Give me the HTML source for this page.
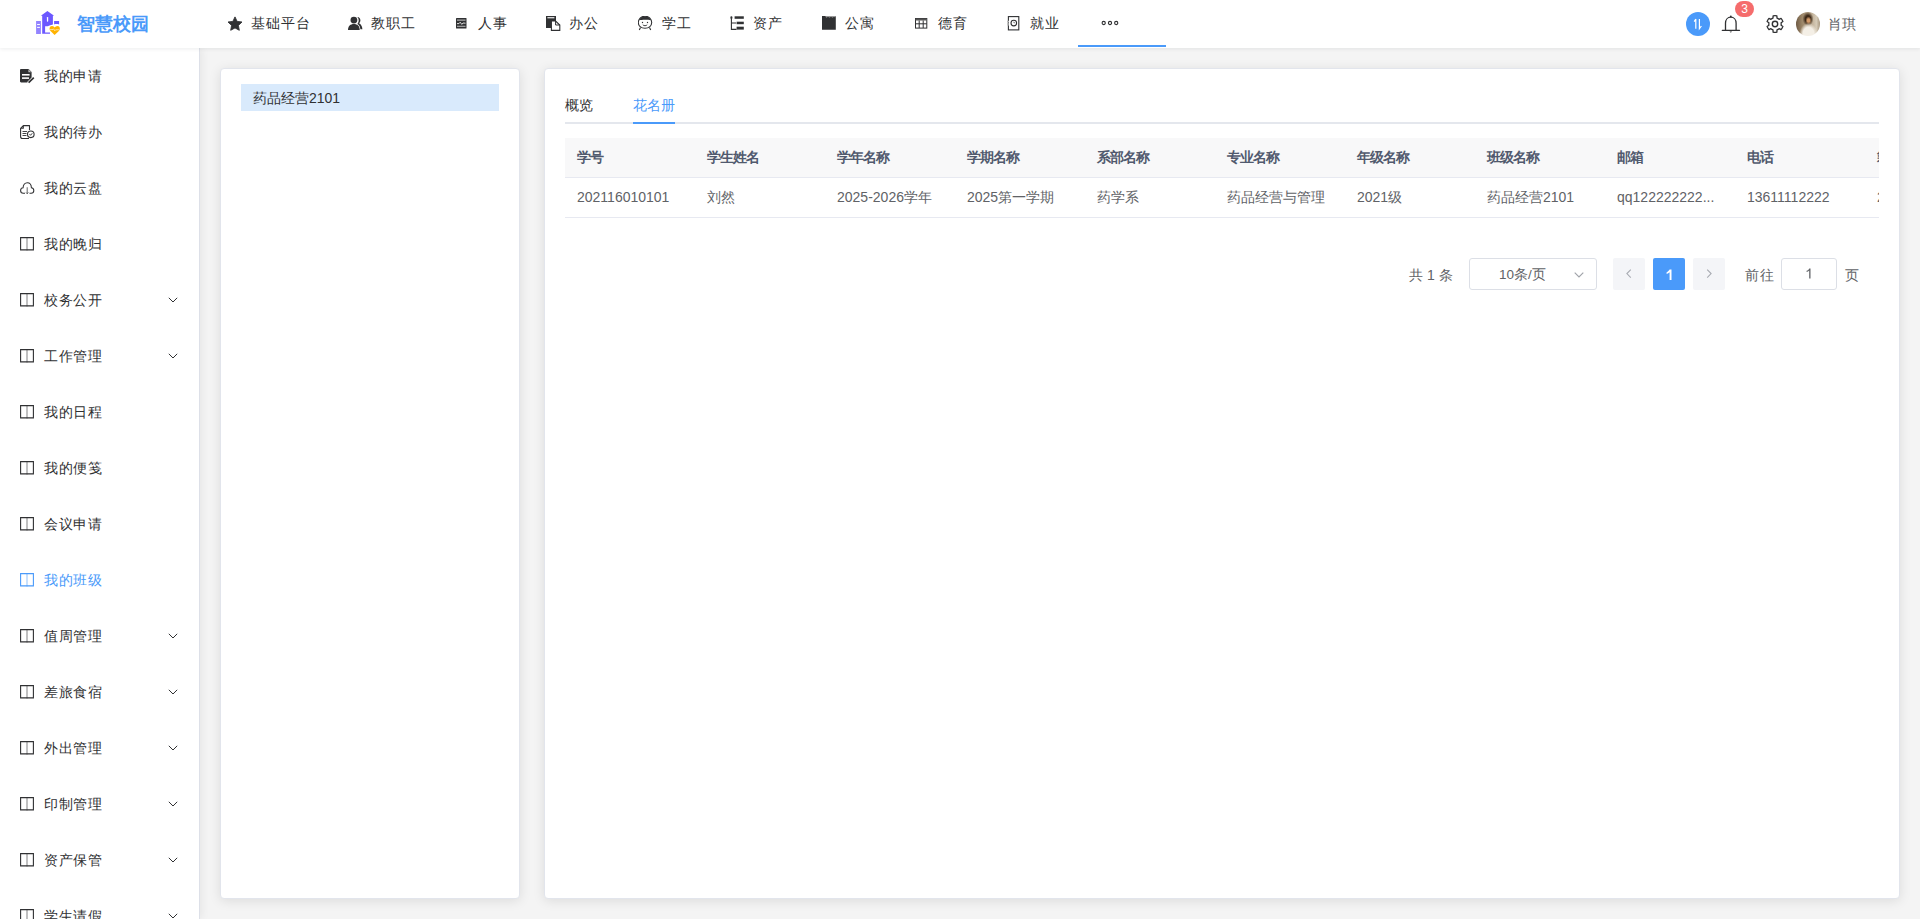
<!DOCTYPE html>
<html><head><meta charset="utf-8">
<style>
*{margin:0;padding:0;box-sizing:border-box}
html,body{width:1920px;height:919px;overflow:hidden;background:#f4f4f4;font-family:"Liberation Sans",sans-serif;font-size:14px;color:#303133}
.hdr{position:absolute;left:0;top:0;width:1920px;height:48px;background:#fff;box-shadow:0 1px 4px rgba(0,21,41,.08);z-index:5}
.logo{position:absolute}
.title{position:absolute;left:77px;top:12px;font-size:18px;font-weight:bold;color:#4a9afa;line-height:24px;letter-spacing:0}
.nav{position:absolute;top:0;height:48px}
.ni{position:absolute;top:0;height:48px;line-height:46px;color:#303133;white-space:nowrap}
.ni svg{position:absolute;top:16px;left:0}
.ni span{position:absolute;top:0;letter-spacing:1px}
.more-ul{position:absolute;left:1078px;top:45px;width:88px;height:2px;background:#4a9afa}
.side{position:absolute;left:0;top:48px;width:200px;height:871px;background:#fff;border-right:1px solid #dde0e8;box-shadow:2px 0 8px rgba(0,0,0,.06);z-index:4;overflow:hidden}
.si{position:absolute;left:0;width:199px;height:56px;line-height:56px}
.si svg.ic{position:absolute;left:20px;top:21px}
.si span{position:absolute;left:44px;top:0;color:#303133;letter-spacing:.5px}
.si.act span{color:#4a9afa}
.si svg.ch{position:absolute;left:168px;top:25px}
.card{position:absolute;background:#fff;border:1px solid #e2e5ec;border-radius:4px;box-shadow:0 2px 12px 0 rgba(0,0,0,.1)}
.tbl{position:absolute;left:20px;top:69px;width:1314px;height:80px;overflow:hidden}
.thead{position:absolute;left:0;top:0;width:1314px;height:40px;background:#f8f8f9;border-bottom:1px solid #e7e9f1}
.tbody{position:absolute;left:0;top:40px;width:1314px;height:40px;border-bottom:1px solid #e7e9f1}
.th{position:absolute;top:0;line-height:39px;font-weight:bold;color:#515a6e;white-space:nowrap;letter-spacing:-1px}
.td{position:absolute;top:0;line-height:39px;color:#606266;white-space:nowrap}
.pg{position:absolute;left:0;top:189px;width:1354px;height:32px}
.sel{position:absolute;left:924px;top:0;width:128px;height:32px;border:1px solid #dcdfe6;border-radius:3px;color:#606266;font-size:13.5px}
.sel span{position:absolute;left:29px;top:1px;line-height:30px}
.pbtn{position:absolute;top:0;width:32px;height:32px;background:#f4f5f8;border-radius:2px;text-align:center;line-height:32px;color:#606266;font-weight:bold;font-size:13px}
.pbtn svg{position:absolute;left:13px;top:11px}
.pbtn.act{background:#4a9afa;color:#fff}
.jump{position:absolute;left:1236px;top:0;width:56px;height:32px;border:1px solid #dcdfe6;border-radius:3px;text-align:center;line-height:30px;color:#606266;font-size:13px}
</style></head><body>
<div class="hdr">
  <svg class="logo" style="position:absolute;left:34px;top:8px" width="28" height="30" viewBox="0 0 28 30">
    <rect x="2.1" y="13" width="4.8" height="13" fill="#9384ff"/>
    <rect x="3.1" y="16" width="2.8" height="1" fill="#fff"/>
    <rect x="3.1" y="18.9" width="2.8" height="1" fill="#fff"/>
    <path d="M6.85 7.7 L13.4 2.9 L20.1 7.7 L18.9 7.7 L18.9 16.5 Q17 17 15.5 17.5 Q14 18.3 13.6 18.3 L11.1 18.3 L11.1 24.5 L16 24.5 L16 25.8 L8.2 25.8 L8.2 7.7 Z" fill="#6c58ff"/>
    <rect x="12.9" y="9" width="1.3" height="4.7" rx=".6" fill="#fff"/>
    <path d="M20.1 13 L25.1 13 L25.1 16.6 L24 16 L21 16 L20.1 16.6Z" fill="#6c58ff"/>
    <path d="M20.6 27.1 L16.5 23 C15 21.5 15.2 18 18 18 C19.3 18 20.1 18.8 20.7 19.6 C21.3 18.8 22.1 18 23.5 18 C26.3 18 26.4 21.5 24.9 23 Z" fill="#ffb300"/>
    <path d="M16 21.6 L19 21.6 L19.6 20.8 L20.8 22.8 L21.6 21.8 L25 21.8" stroke="#fff" stroke-width=".7" fill="none" opacity=".85"/>
  </svg>
  <div class="title">智慧校园</div>
  <!-- nav -->
  <div class="ni" style="left:227px"><svg width="16" height="16" viewBox="0 0 16 16" style="top:15.5px;left:0"><path d="M8 .9 L10.1 5.4 L15 6 L11.4 9.4 L12.3 14.3 L8 11.9 L3.7 14.3 L4.6 9.4 L1 6 L5.9 5.4 Z" fill="#303133" stroke="#303133" stroke-width=".9" stroke-linejoin="round"/></svg><span style="left:24px">基础平台</span></div>
  <div class="ni" style="left:348px"><svg width="15" height="15" viewBox="0 0 15 15" style="top:16px"><path d="M9.3 .9 C11.2 .9 12.4 2.4 12.4 4.3 C12.4 5.6 11.8 6.7 11 7.3 C12.9 8.1 14.2 10.2 14.4 13.3 L12.4 13.3 C12.2 10.6 11.2 8.8 9.3 8 C10.2 7 10.7 5.7 10.7 4.3 C10.7 3 10.2 1.8 9.3 .9 Z" fill="#303133"/><circle cx="5.9" cy="4.1" r="3.4" fill="#303133"/><path d="M0 14 C0 10 2.4 8 5.9 8 C9.4 8 11.7 10 11.7 14 Z" fill="#303133"/></svg><span style="left:23px">教职工</span></div>
  <div class="ni" style="left:456px"><svg width="11" height="11" viewBox="0 0 11 11" style="top:18px"><rect x="0" y="0" width="10.5" height="10.5" rx=".6" fill="#303133"/><rect x="1" y="1.6" width="8.5" height="1" fill="#ccc"/><rect x="1" y="7.8" width="8.5" height=".9" fill="#ccc"/><path d="M1 5.6 L3 5.6 L4.2 4.2 L5.8 6.4 L7 5 L9.5 5.2" stroke="#eee" stroke-width=".9" fill="none"/></svg><span style="left:22px">人事</span></div>
  <div class="ni" style="left:546px"><svg width="15" height="15" viewBox="0 0 15 15" style="top:16px"><rect x="0" y="0" width="10" height="12" fill="#303133"/><rect x="1.4" y="1.2" width="7" height="1.1" fill="#fff"/><path d="M5.4 5 L9.6 5 L13.8 9 L13.8 14.4 L5.4 14.4 Z" fill="#fff" stroke="#303133" stroke-width="1.1"/><path d="M9.6 5 L9.6 9 L13.8 9" fill="none" stroke="#303133" stroke-width="1"/></svg><span style="left:23px">办公</span></div>
  <div class="ni" style="left:638px"><svg width="15" height="15" viewBox="0 0 15 15" style="top:16px"><path d="M7 .2 C3 .2 .3 3 .3 6.6 C.3 9.8 3 12.3 7 12.3 C11 12.3 13.7 9.8 13.7 6.6 C13.7 3 11 .2 7 .2Z" fill="none" stroke="#303133" stroke-width="1.1"/><path d="M.9 4.3 C1.8 1.6 4.2 .4 7 .4 C9.8 .4 12.2 1.6 13.1 4.3 C10 3.6 4 3.6 .9 4.3Z" fill="#303133"/><circle cx="4.5" cy="6.5" r=".7" fill="#303133"/><circle cx="9.5" cy="6.5" r=".7" fill="#303133"/><path d="M4.8 8.8 C5.8 10 8.2 10 9.2 8.8" stroke="#303133" stroke-width=".9" fill="none"/><path d="M2.5 11.4 L1.3 14 M11.5 11.4 L12.7 14" stroke="#303133" stroke-width="1.1"/></svg><span style="left:24px">学工</span></div>
  <div class="ni" style="left:730px"><svg width="15" height="15" viewBox="0 0 15 15" style="top:16px"><rect x=".4" y=".2" width="2" height="2.8" rx=".9" fill="#303133"/><path d="M1.4 2.6 V13.4 H6.5 M1.4 7 H6" stroke="#303133" stroke-width="1.1" fill="none"/><rect x="4.6" y=".3" width="9.2" height="2.5" fill="#303133"/><rect x="6.6" y="5.7" width="7.2" height="2.5" fill="#303133"/><rect x="6.6" y="10.7" width="7.2" height="2.9" fill="#303133"/></svg><span style="left:23px">资产</span></div>
  <div class="ni" style="left:822px"><svg width="15" height="15" viewBox="0 0 15 15" style="top:16px"><path d="M0 0 L4 0 L4 1.2 L5 1.2 L5 0 L7 0 L7 1.2 L8 1.2 L8 0 L10 0 L10 1.2 L11 1.2 L11 0 L13.8 0 L13.8 13.8 L0 13.8Z" fill="#303133"/><rect x="3.5" y="0" width="10.3" height="1.1" fill="#999"/></svg><span style="left:23px">公寓</span></div>
  <div class="ni" style="left:915px"><svg width="13" height="11" viewBox="0 0 13 11" style="top:18px"><rect x=".5" y=".5" width="11.3" height="9.6" fill="none" stroke="#303133" stroke-width="1"/><rect x=".5" y=".5" width="11.3" height="2" fill="#555"/><path d="M4.2 2.5 V10 M8.2 2.5 V10 M.5 5.8 H11.8" stroke="#303133" stroke-width="1"/></svg><span style="left:23px">德育</span></div>
  <div class="ni" style="left:1006px"><svg width="14" height="15" viewBox="0 0 14 15" style="top:16px"><rect x="2.4" y=".6" width="10.4" height="13.3" fill="none" stroke="#303133" stroke-width="1.1"/><circle cx="7.8" cy="7.1" r="2.8" fill="none" stroke="#303133" stroke-width="1.1"/><path d="M7.8 5.8 L8.4 7.2" stroke="#303133" stroke-width=".8"/><path d="M1 5.3 H3.6 M1 7.1 H3.6 M1 8.9 H3.6" stroke="#fff" stroke-width=".8"/><path d="M1 5.3 H2 M1 7.1 H2 M1 8.9 H2" stroke="#888" stroke-width=".7"/></svg><span style="left:24px">就业</span></div>
  <div class="ni" style="left:1101px"><svg width="18" height="6" viewBox="0 0 18 6" style="top:20px"><circle cx="2.7" cy="3" r="1.6" fill="none" stroke="#303133" stroke-width="1.1"/><circle cx="9" cy="3" r="1.6" fill="none" stroke="#303133" stroke-width="1.1"/><circle cx="15.2" cy="3" r="1.6" fill="none" stroke="#303133" stroke-width="1.1"/></svg></div>
  <div class="more-ul"></div>
  <!-- right -->
  <div style="position:absolute;left:1686px;top:12px;width:24px;height:24px;border-radius:50%;background:#4a9afa"><svg width="24" height="24" viewBox="0 0 24 24"><path d="M9.8 7 L9.8 16.7 M9.8 7 L8.2 9.6" stroke="#fff" stroke-width="1.2" fill="none"/><path d="M13.4 7 L13.4 16.7 L15.4 14" stroke="#fff" stroke-width="1.2" fill="none"/></svg></div>
  <svg style="position:absolute;left:1721px;top:15px" width="20" height="20" viewBox="0 0 20 20"><path d="M4.5 15 L4.5 8.2 C4.5 4.6 6.8 2.2 9.8 2.2 C12.8 2.2 15.1 4.6 15.1 8.2 L15.1 15" fill="none" stroke="#303133" stroke-width="1.3"/><path d="M1.3 15.3 H18.5" stroke="#303133" stroke-width="1.3" stroke-linecap="round"/><circle cx="9.8" cy="1.5" r=".9" fill="#303133"/><path d="M8.5 16.2 H11.1 L9.8 18.1Z" fill="#777"/></svg>
  <div style="position:absolute;left:1735px;top:1px;width:19px;height:16px;border-radius:8px;background:#f56c6c;color:#fff;font-size:12px;line-height:16px;text-align:center">3</div>
  <svg style="position:absolute;left:1766px;top:15px" width="18" height="18" viewBox="0 0 18 18"><path d="M6.98 3.14 L7.13 0.91 A8.30 8.30 0 0 1 10.87 0.91 L11.02 3.14 A6.20 6.20 0 0 1 13.07 4.32 L15.07 3.34 A8.30 8.30 0 0 1 16.94 6.57 L15.09 7.82 A6.20 6.20 0 0 1 15.09 10.18 L16.94 11.43 A8.30 8.30 0 0 1 15.07 14.66 L13.07 13.68 A6.20 6.20 0 0 1 11.02 14.86 L10.87 17.09 A8.30 8.30 0 0 1 7.13 17.09 L6.98 14.86 A6.20 6.20 0 0 1 4.93 13.68 L2.93 14.66 A8.30 8.30 0 0 1 1.06 11.43 L2.91 10.18 A6.20 6.20 0 0 1 2.91 7.82 L1.06 6.57 A8.30 8.30 0 0 1 2.93 3.34 L4.93 4.32 A6.20 6.20 0 0 1 6.98 3.14 Z" fill="none" stroke="#303133" stroke-width="1.3" stroke-linejoin="round"/><circle cx="9" cy="9" r="2.7" fill="none" stroke="#303133" stroke-width="1.4"/></svg>
  <div style="position:absolute;left:1796px;top:12px;width:24px;height:24px;border-radius:50%;overflow:hidden;background:radial-gradient(ellipse 9px 11px at 12.5px 22px,#f4efe6 62%,rgba(244,239,230,0) 100%),radial-gradient(ellipse 3px 4px at 12.5px 8.5px,#d49a68 40%,rgba(212,154,104,0) 100%),radial-gradient(ellipse 5.5px 7px at 12px 7px,#3e2a18 50%,rgba(62,42,24,0) 100%),linear-gradient(90deg,#6e5a44 0,#9c8668 25%,#b8a68c 60%,#d6cbb8 85%,#a89880 100%)"></div>
  <div style="position:absolute;left:1828px;top:12px;line-height:24px;color:#606266">肖琪</div>
</div>
<div class="side">
<div class="si" style="top:0px"><svg class="ic" width="15" height="15" viewBox="0 0 15 15" style="top:21px"><path d="M1.2 0 H8.6 L11.6 3 V8.4 L7.6 12.4 L7.3 13.4 H1.2 C.5 13.4 0 12.9 0 12.2 V1.2 C0 .5 .5 0 1.2 0Z" fill="#303133"/><path d="M8.4 .3 L11.3 3.2 L8.4 3.2Z" fill="#bbb"/><rect x="2" y="5" width="7.6" height="1.6" fill="#fff"/><rect x="2" y="8.3" width="7" height="1.6" fill="#fff"/><path d="M8.6 13.6 L13.8 8.6" stroke="#303133" stroke-width="1.7"/></svg><span>我的申请</span></div>
<div class="si" style="top:56px"><svg class="ic" width="15" height="15" viewBox="0 0 15 15" style="top:21px"><path d="M3.3 .6 H9.5 V5 M9 13.5 H2.3 C1.3 13.5 .6 12.8 .6 11.8 V3.3 L3.3 .6 V3.3 H.6" fill="none" stroke="#303133" stroke-width="1.1" stroke-linejoin="round"/><path d="M2.5 6.5 H7 M2.5 8.5 H6.5 M2.5 10.5 H6.5" stroke="#303133" stroke-width=".9"/><circle cx="10.8" cy="9.3" r="3.3" fill="#fff" stroke="#303133" stroke-width="1.1"/><path d="M9.4 9 L10.6 10.3 L12.3 8.2" fill="none" stroke="#303133" stroke-width=".9"/></svg><span>我的待办</span></div>
<div class="si" style="top:112px"><svg class="ic" width="15" height="13" viewBox="0 0 15 13" style="top:22px"><path d="M5 11.2 H3.3 C1.8 11.2 .6 10 .6 8.5 C.6 7 1.7 5.9 3.1 5.8 C3.2 3 5 .7 7.3 .7 C9.6 .7 11.3 2.9 11.4 5.7 C12.8 5.8 13.8 7 13.8 8.5 C13.8 10 12.6 11.2 11.1 11.2 H9.5" fill="none" stroke="#303133" stroke-width="1.05"/><path d="M7.2 5.2 V11.4" stroke="#303133" stroke-width="1.05" opacity=".7"/><path d="M6.2 10.6 L7.2 11.6 L8.2 10.6" fill="none" stroke="#303133" stroke-width="1"/></svg><span>我的云盘</span></div>
<div class="si" style="top:168px"><svg class="ic" width="15" height="15" viewBox="0 0 15 15" style="top:21px"><path d="M.6 .6 H13.4 V12.9 H.6 Z" fill="none" stroke="#303133" stroke-width="1.1"/><path d="M7 .6 V13.6" stroke="#303133" stroke-width="1.1" opacity=".55"/></svg><span>我的晚归</span></div>
<div class="si" style="top:224px"><svg class="ic" width="15" height="15" viewBox="0 0 15 15" style="top:21px"><path d="M.6 .6 H13.4 V12.9 H.6 Z" fill="none" stroke="#303133" stroke-width="1.1"/><path d="M7 .6 V13.6" stroke="#303133" stroke-width="1.1" opacity=".55"/></svg><span>校务公开</span><svg class="ch" width="10" height="6" viewBox="0 0 10 6"><path d="M.8 .8 L5 5 L9.2 .8" fill="none" stroke="#303133" stroke-width="1"/></svg></div>
<div class="si" style="top:280px"><svg class="ic" width="15" height="15" viewBox="0 0 15 15" style="top:21px"><path d="M.6 .6 H13.4 V12.9 H.6 Z" fill="none" stroke="#303133" stroke-width="1.1"/><path d="M7 .6 V13.6" stroke="#303133" stroke-width="1.1" opacity=".55"/></svg><span>工作管理</span><svg class="ch" width="10" height="6" viewBox="0 0 10 6"><path d="M.8 .8 L5 5 L9.2 .8" fill="none" stroke="#303133" stroke-width="1"/></svg></div>
<div class="si" style="top:336px"><svg class="ic" width="15" height="15" viewBox="0 0 15 15" style="top:21px"><path d="M.6 .6 H13.4 V12.9 H.6 Z" fill="none" stroke="#303133" stroke-width="1.1"/><path d="M7 .6 V13.6" stroke="#303133" stroke-width="1.1" opacity=".55"/></svg><span>我的日程</span></div>
<div class="si" style="top:392px"><svg class="ic" width="15" height="15" viewBox="0 0 15 15" style="top:21px"><path d="M.6 .6 H13.4 V12.9 H.6 Z" fill="none" stroke="#303133" stroke-width="1.1"/><path d="M7 .6 V13.6" stroke="#303133" stroke-width="1.1" opacity=".55"/></svg><span>我的便笺</span></div>
<div class="si" style="top:448px"><svg class="ic" width="15" height="15" viewBox="0 0 15 15" style="top:21px"><path d="M.6 .6 H13.4 V12.9 H.6 Z" fill="none" stroke="#303133" stroke-width="1.1"/><path d="M7 .6 V13.6" stroke="#303133" stroke-width="1.1" opacity=".55"/></svg><span>会议申请</span></div>
<div class="si act" style="top:504px"><svg class="ic" width="15" height="15" viewBox="0 0 15 15" style="top:21px"><path d="M.6 .6 H13.4 V12.9 H.6 Z" fill="none" stroke="#4a9afa" stroke-width="1.1"/><path d="M7 .6 V13.6" stroke="#4a9afa" stroke-width="1.1" opacity=".55"/></svg><span>我的班级</span></div>
<div class="si" style="top:560px"><svg class="ic" width="15" height="15" viewBox="0 0 15 15" style="top:21px"><path d="M.6 .6 H13.4 V12.9 H.6 Z" fill="none" stroke="#303133" stroke-width="1.1"/><path d="M7 .6 V13.6" stroke="#303133" stroke-width="1.1" opacity=".55"/></svg><span>值周管理</span><svg class="ch" width="10" height="6" viewBox="0 0 10 6"><path d="M.8 .8 L5 5 L9.2 .8" fill="none" stroke="#303133" stroke-width="1"/></svg></div>
<div class="si" style="top:616px"><svg class="ic" width="15" height="15" viewBox="0 0 15 15" style="top:21px"><path d="M.6 .6 H13.4 V12.9 H.6 Z" fill="none" stroke="#303133" stroke-width="1.1"/><path d="M7 .6 V13.6" stroke="#303133" stroke-width="1.1" opacity=".55"/></svg><span>差旅食宿</span><svg class="ch" width="10" height="6" viewBox="0 0 10 6"><path d="M.8 .8 L5 5 L9.2 .8" fill="none" stroke="#303133" stroke-width="1"/></svg></div>
<div class="si" style="top:672px"><svg class="ic" width="15" height="15" viewBox="0 0 15 15" style="top:21px"><path d="M.6 .6 H13.4 V12.9 H.6 Z" fill="none" stroke="#303133" stroke-width="1.1"/><path d="M7 .6 V13.6" stroke="#303133" stroke-width="1.1" opacity=".55"/></svg><span>外出管理</span><svg class="ch" width="10" height="6" viewBox="0 0 10 6"><path d="M.8 .8 L5 5 L9.2 .8" fill="none" stroke="#303133" stroke-width="1"/></svg></div>
<div class="si" style="top:728px"><svg class="ic" width="15" height="15" viewBox="0 0 15 15" style="top:21px"><path d="M.6 .6 H13.4 V12.9 H.6 Z" fill="none" stroke="#303133" stroke-width="1.1"/><path d="M7 .6 V13.6" stroke="#303133" stroke-width="1.1" opacity=".55"/></svg><span>印制管理</span><svg class="ch" width="10" height="6" viewBox="0 0 10 6"><path d="M.8 .8 L5 5 L9.2 .8" fill="none" stroke="#303133" stroke-width="1"/></svg></div>
<div class="si" style="top:784px"><svg class="ic" width="15" height="15" viewBox="0 0 15 15" style="top:21px"><path d="M.6 .6 H13.4 V12.9 H.6 Z" fill="none" stroke="#303133" stroke-width="1.1"/><path d="M7 .6 V13.6" stroke="#303133" stroke-width="1.1" opacity=".55"/></svg><span>资产保管</span><svg class="ch" width="10" height="6" viewBox="0 0 10 6"><path d="M.8 .8 L5 5 L9.2 .8" fill="none" stroke="#303133" stroke-width="1"/></svg></div>
<div class="si" style="top:840px"><svg class="ic" width="15" height="15" viewBox="0 0 15 15" style="top:21px"><path d="M.6 .6 H13.4 V12.9 H.6 Z" fill="none" stroke="#303133" stroke-width="1.1"/><path d="M7 .6 V13.6" stroke="#303133" stroke-width="1.1" opacity=".55"/></svg><span>学生请假</span><svg class="ch" width="10" height="6" viewBox="0 0 10 6"><path d="M.8 .8 L5 5 L9.2 .8" fill="none" stroke="#303133" stroke-width="1"/></svg></div>
</div>
<div class="card" style="left:220px;top:68px;width:300px;height:831px">
  <div style="position:absolute;left:20px;top:15px;width:258px;height:27px;background:#d9eafc"></div>
  <div style="position:absolute;left:32px;top:16px;line-height:27px;color:#303133">药品经营2101</div>
</div>
<div class="card" style="left:544px;top:68px;width:1356px;height:831px">
  <div style="position:absolute;left:20px;top:28px;line-height:16px;color:#303133">概览</div>
  <div style="position:absolute;left:88px;top:28px;line-height:16px;color:#4a9afa">花名册</div>
  <div style="position:absolute;left:20px;top:53px;width:1314px;height:2px;background:#e4e7ed"></div>
  <div style="position:absolute;left:88px;top:53px;width:42px;height:2px;background:#4a9afa"></div>
  <div class="tbl">
    <div class="thead"><div class="th" style="left:12px">学号</div><div class="th" style="left:142px">学生姓名</div><div class="th" style="left:272px">学年名称</div><div class="th" style="left:402px">学期名称</div><div class="th" style="left:532px">系部名称</div><div class="th" style="left:662px">专业名称</div><div class="th" style="left:792px">年级名称</div><div class="th" style="left:922px">班级名称</div><div class="th" style="left:1052px">邮箱</div><div class="th" style="left:1182px">电话</div><div class="th" style="left:1312px">籍贯</div></div>
    <div class="tbody"><div class="td" style="left:12px">202116010101</div><div class="td" style="left:142px">刘然</div><div class="td" style="left:272px">2025-2026学年</div><div class="td" style="left:402px">2025第一学期</div><div class="td" style="left:532px">药学系</div><div class="td" style="left:662px">药品经营与管理</div><div class="td" style="left:792px">2021级</div><div class="td" style="left:922px">药品经营2101</div><div class="td" style="left:1052px">qq122222222...</div><div class="td" style="left:1182px">13611112222</div><div class="td" style="left:1312px">2</div></div>
  </div>
  <div class="pg">
    <span style="position:absolute;left:864px;top:1px;line-height:32px;color:#606266">共 1 条</span>
    <div class="sel"><span>10条/页</span><svg width="10" height="6" viewBox="0 0 10 6" style="position:absolute;left:104px;top:13px"><path d="M.7 .7 L5 5 L9.3 .7" fill="none" stroke="#a0a3a9" stroke-width="1.15"/></svg></div>
    <div class="pbtn" style="left:1068px"><svg width="6" height="10" viewBox="0 0 6 10"><path d="M4.8 .6 L.9 4.6 L4.8 8.6" fill="none" stroke="#a8abb2" stroke-width="1.1"/></svg></div>
    <div class="pbtn act" style="left:1108px"><svg width="8" height="12" viewBox="0 0 8 12" style="position:absolute;left:12px;top:10.5px"><path d="M4.6 0.6 L6.5 0.6 L6.5 10.9 L4.6 10.9 L4.6 3.3 C3.8 4 2.9 4.5 1.6 4.9 L1.6 3.2 C2.9 2.7 4 1.8 4.6 0.6 Z" fill="#fff"/></svg></div>
    <div class="pbtn" style="left:1148px"><svg width="6" height="10" viewBox="0 0 6 10"><path d="M1.2 .6 L5.1 4.6 L1.2 8.6" fill="none" stroke="#a8abb2" stroke-width="1.1"/></svg></div>
    <span style="position:absolute;left:1200px;top:1px;line-height:32px;color:#606266;letter-spacing:.5px">前往</span>
    <div class="jump"><svg width="8" height="12" viewBox="0 0 8 12" style="position:absolute;left:23px;top:9px"><path d="M4.3 .4 L5.5 .4 L5.5 10.6 L4.2 10.6 L4.2 2.5 C3.5 3.2 2.6 3.7 1.6 4 L1.6 2.8 C2.8 2.3 3.8 1.5 4.3 .4 Z" fill="#606266"/></svg></div>
    <span style="position:absolute;left:1300px;top:1px;line-height:32px;color:#606266">页</span>
  </div>
</div>
</body></html>
